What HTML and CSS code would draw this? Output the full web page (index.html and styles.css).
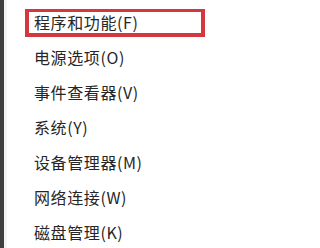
FILE: index.html
```html
<!DOCTYPE html>
<html lang="zh-CN">
<head>
<meta charset="utf-8">
<link rel="stylesheet" href="styles.css">
</head>
<body>
<div class="screen">
  <div class="edge"></div>
  <ul class="menu">
    <li class="item active"><span>程序和功能(F)</span></li>
    <li class="item"><span>电源选项(O)</span></li>
    <li class="item"><span>事件查看器(V)</span></li>
    <li class="item"><span>系统(Y)</span></li>
    <li class="item"><span>设备管理器(M)</span></li>
    <li class="item"><span>网络连接(W)</span></li>
    <li class="item"><span>磁盘管理(K)</span></li>
  </ul>
</div>
</body>
</html>
```
FILE: styles.css
```css
html, body {
  margin: 0;
  padding: 0;
  background: #ffffff;
}
.screen {
  display: flex;
  width: 316px;
  height: 248px;
  overflow: hidden;
  background: #ffffff;
}
.edge {
  width: 4px;
  flex: none;
  background: #3f3f3f;
  border-right: 3px solid #f4f4f4;
}
.menu {
  list-style: none;
  margin: 0;
  padding: 9px 0 0 18px;
  font-family: "Noto Sans CJK SC", "Microsoft YaHei", sans-serif;
  font-size: 16px;
  font-weight: 400;
  letter-spacing: 0.6px;
  color: #262626;
}
.item {
  height: 35px;
  display: flex;
  align-items: center;
  padding-left: 9px;
  white-space: nowrap;
}
.item.active {
  box-sizing: border-box;
  width: 180px;
  height: 28px;
  margin-bottom: 2px;
  padding-left: 5px;
  padding-bottom: 2px;
  border: 4px solid #d6363d;
  border-top-width: 3px;
}
```
